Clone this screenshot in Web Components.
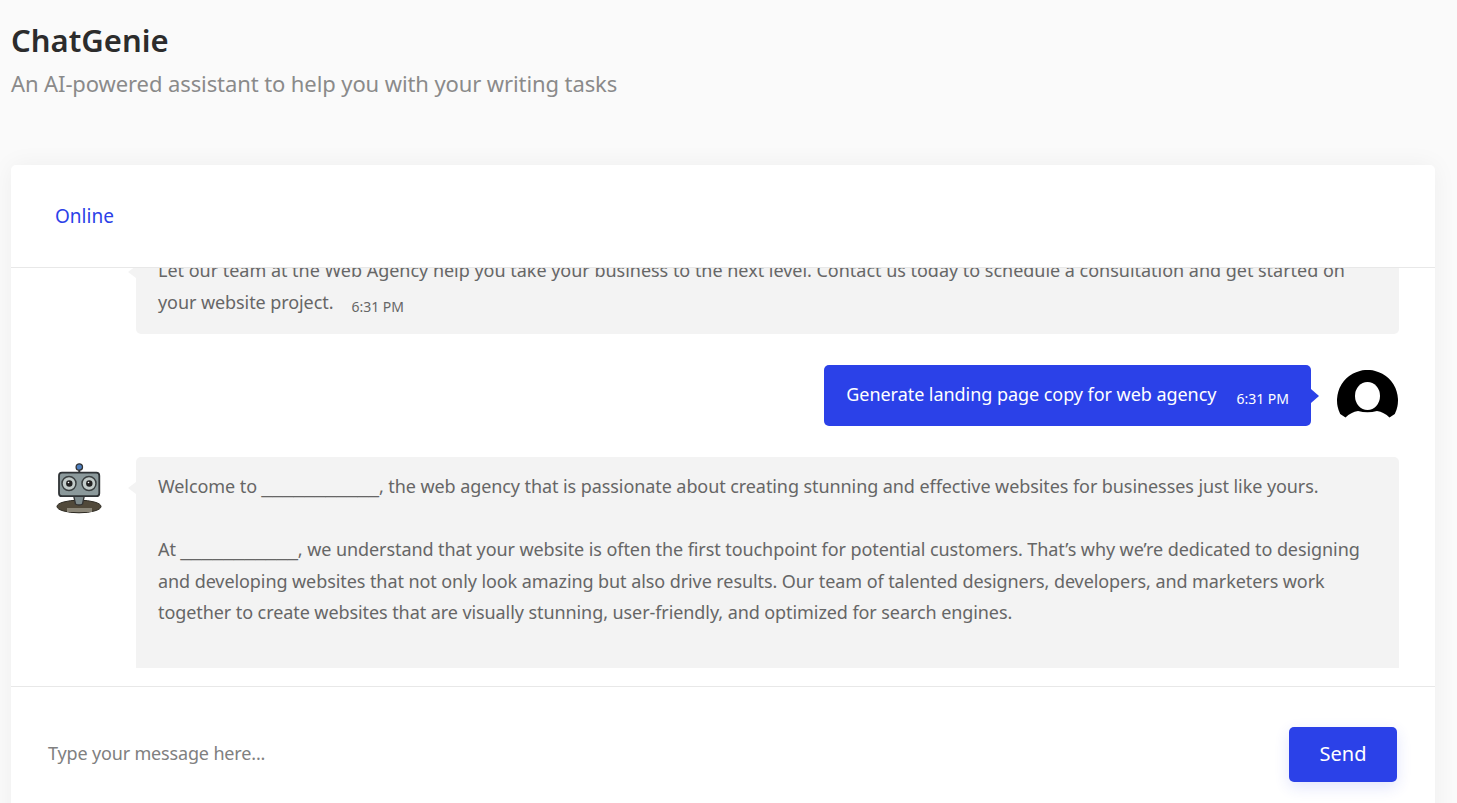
<!DOCTYPE html>
<html>
<head>
<meta charset="utf-8">
<title>ChatGenie</title>
<style>
html,body{margin:0;height:100%;overflow:hidden;background:#fafafa;}
body{font-family:"Noto Sans",sans-serif;}
.u{font:400 19.2px/1 "Liberation Sans",sans-serif;letter-spacing:0;}
.w{letter-spacing:-.02px;}
</style>
</head>
<body>
<chat-app>
  <page-head slot="head" title-text="ChatGenie" sub="An AI-powered assistant to help you with your writing tasks"></page-head>
  <chat-card slot="card">
    <chat-msg from="bot" time="6:31 PM"><span class="w">Let our team at the Web Agency help you take your business to the next level. Contact us today to schedule a consultation and get started on</span> your website project.</chat-msg>
    <chat-msg from="user" time="6:31 PM">Generate landing page copy for web agency</chat-msg>
    <chat-msg from="bot" icon>Welcome to <span class="u">___________</span>, the web agency that is passionate about creating stunning and effective websites for businesses just like yours.<br><br>At <span class="u">___________</span>, we understand that your website is often the first touchpoint for potential customers. That’s why we’re dedicated to designing<br>and developing websites that not only look amazing but also drive results. Our team of talented designers, developers, and marketers work together to create websites that are visually stunning, user-friendly, and optimized for search engines.<br><br>We offer a range of services to help your business succeed online, from web design and development to branding and more.</chat-msg>
  </chat-card>
</chat-app>
<script>
class ChatApp extends HTMLElement{
  constructor(){
    super();
    this.attachShadow({mode:'open'});
    this.shadowRoot.innerHTML=`
    <style>
    :host{display:block;padding:0 22px 0 11px;height:100vh;box-sizing:border-box;overflow:hidden;}
    </style>
    <slot name="head"></slot>
    <slot name="card"></slot>`;
  }
}
customElements.define('chat-app',ChatApp);

class PageHead extends HTMLElement{
  constructor(){
    super();
    this.attachShadow({mode:'open'});
  }
  connectedCallback(){
    this.shadowRoot.innerHTML=`
    <style>
    :host{display:block;height:165px;padding-top:20px;box-sizing:border-box;}
    h1{margin:0;font:600 31px/40px "Noto Sans",sans-serif;color:#2c2c2c;}
    p{margin:3px 0 0;font:400 22px/40px "Noto Sans",sans-serif;color:#8a8a8a;letter-spacing:-.1px;}
    </style>
    <h1>${this.getAttribute('title-text')}</h1>
    <p>${this.getAttribute('sub')}</p>`;
  }
}
customElements.define('page-head',PageHead);

class ChatCard extends HTMLElement{
  constructor(){
    super();
    this.attachShadow({mode:'open'});
    this.shadowRoot.innerHTML=`
    <style>
    :host{display:block;background:#fff;border-radius:5px;box-shadow:0 0 24px rgba(0,0,0,.05);height:680px;}
    .top{height:103px;box-sizing:border-box;border-bottom:1px solid #e8e8e8;padding:38px 0 0 44px;font:400 19px/26px "Noto Sans",sans-serif;color:#2b41e8;}
    .log{height:400px;overflow:hidden;padding:0 36px 0 44px;}
    .inner{margin-top:-27px;display:flex;flex-direction:column;gap:31px;}
    .foot{margin-top:18px;border-top:1px solid #e8e8e8;display:flex;align-items:flex-start;justify-content:space-between;padding:40px 38px 0 37px;}
    .ph{font:400 18px/52px "Noto Sans",sans-serif;color:#808080;letter-spacing:-.16px;}
    button{width:108px;height:55px;border:0;border-radius:5px;padding:0 0 2px;background:#2b41e8;color:#fff;font:400 20px "Noto Sans",sans-serif;box-shadow:0 5px 15px rgba(43,65,232,.14);}
    </style>
    <div class="top">Online</div>
    <div class="log"><div class="inner"><slot></slot></div></div>
    <div class="foot"><span class="ph">Type your message here...</span><button>Send</button></div>`;
  }
}
customElements.define('chat-card',ChatCard);

class ChatMsg extends HTMLElement{
  constructor(){
    super();
    this.attachShadow({mode:'open'});
  }
  connectedCallback(){
    const user=this.getAttribute('from')==='user';
    const time=this.getAttribute('time');
    const bot=`<svg class="av" width="47" height="52" viewBox="0 0 47 52">
      <ellipse cx="24" cy="43.5" rx="22" ry="6.3" fill="#51493a" stroke="#2d2a22" stroke-width="1"/>
      <rect x="12" y="45" width="25" height="4" fill="#8b8678"/>
      <path d="M18 30 L30 30 L27.5 41 Q24 43 20.5 41Z" fill="#7e8b8d" stroke="#333" stroke-width="1.3"/>
      <line x1="24.3" y1="6" x2="24.3" y2="11" stroke="#333" stroke-width="2"/>
      <circle cx="24.3" cy="4" r="3.2" fill="#4d7fc0" stroke="#333" stroke-width="1.3"/>
      <rect x="4" y="9.7" width="40.3" height="23.5" rx="3" fill="#8b999b" stroke="#2f3336" stroke-width="1.8"/>
      <circle cx="14" cy="20.5" r="7" fill="#c2cbc9" stroke="#3a3f40" stroke-width="1.5"/>
      <circle cx="34" cy="20.5" r="7" fill="#c2cbc9" stroke="#3a3f40" stroke-width="1.5"/>
      <circle cx="14.3" cy="20.5" r="3.2" fill="#222"/>
      <circle cx="34.3" cy="20.5" r="3.2" fill="#222"/>
      <circle cx="13.5" cy="19.5" r=".8" fill="#fff"/>
      <circle cx="33.5" cy="19.5" r=".8" fill="#fff"/>
    </svg>`;
    const face=`<svg class="av" width="61" height="61" viewBox="0 0 61 61" style="margin:5px 1px -5px 0">
      <path d="M8.5 47.5 L3.2 44 A30.5 30.5 0 1 1 57.8 44 L52.5 47.5 Q47 42 40 41 Q30.5 43.5 21 41 Q14 42 8.5 47.5Z" fill="#000"/>
      <ellipse cx="30.5" cy="26" rx="12.5" ry="14" fill="#fff"/>
    </svg>`;
    this.shadowRoot.innerHTML=`
    <style>
    :host{display:flex;justify-content:${user?'flex-end':'flex-start'};position:relative;}
    .av{flex:none;display:block;}
    .slot{flex:none;width:81px;padding-top:6px;box-sizing:border-box;}
    .b{position:relative;box-sizing:border-box;border-radius:5px;font:400 18px/31.5px "Noto Sans",sans-serif;letter-spacing:-.08px;}
    .bot{flex:1;background:#f3f3f3;color:#666;padding:14px 22px 16px;}
    .bot::before{content:"";position:absolute;left:-8px;top:25px;border:6px solid transparent;border-left:0;border-right:8px solid #f3f3f3;}
    .user{background:#2b41e8;color:#fff;padding:14px 22px;height:61px;margin-right:26px;white-space:nowrap;letter-spacing:-.05px;}
    .user::after{content:"";position:absolute;right:-8px;top:24px;border:7px solid transparent;border-right:0;border-left:8px solid #2b41e8;}
    .t{font-size:14px;line-height:1;letter-spacing:0;margin-left:18px;position:relative;top:3px;}
    .user .t{margin-left:20px;}
    </style>
    ${user?'':`<div class="slot">${this.hasAttribute('icon')?bot:''}</div>`}
    <div class="b ${user?'user':'bot'}"><slot></slot>${time?`<span class="t">${time}</span>`:''}</div>
    ${user?face:''}`;
  }
}
customElements.define('chat-msg',ChatMsg);
</script>
</body>
</html>
